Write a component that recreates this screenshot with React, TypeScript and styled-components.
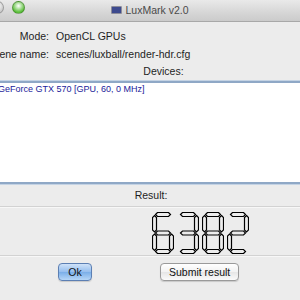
import styled, { createGlobalStyle } from "styled-components";

const GlobalStyle = createGlobalStyle`
  html, body {
    margin: 0;
    padding: 0;
    width: 300px;
    height: 300px;
    overflow: hidden;
    background: #ececec;
  }
  body {
    font-family: "Liberation Sans", "DejaVu Sans", sans-serif;
  }
`;

const Window = styled.div`
  margin-left: -40px;
  width: 380px;
  height: 300px;
  display: flex;
  flex-direction: column;
  background: #ececec;
  color: #1e1e1e;
`;

const TitleBar = styled.div`
  height: 21px;
  flex: none;
  display: flex;
  align-items: center;
  justify-content: center;
  position: relative;
  background: linear-gradient(#e9e9e9, #d6d6d6 60%, #cbcbcb);
  border-bottom: 1px solid #a8a8a8;
`;

const Lights = styled.div`
  position: absolute;
  left: 31px;
  top: 1px;
  display: flex;
  gap: 8px;
`;

const Light = styled.span<{ $color: string }>`
  width: 11px;
  height: 11px;
  border-radius: 50%;
  background: radial-gradient(circle at 50% 35%, #ffffff 0%, ${(p) => p.$color} 70%);
  border: 1px solid rgba(0, 0, 0, 0.25);
`;

const Title = styled.div`
  display: flex;
  align-items: center;
  gap: 3px;
  font-size: 10.5px;
  color: #4a4a4a;
  margin-top: -2px;
`;

const TitleIcon = styled.span`
  width: 9px;
  height: 6px;
  background: #3d4a8e;
  border: 1px solid #8d8d99;
  border-radius: 1px;
`;

const Form = styled.div`
  display: grid;
  grid-template-columns: 89px 1fr;
  column-gap: 7px;
  row-gap: 4px;
  padding-top: 7px;
  font-size: 10.5px;
  line-height: 14px;
`;

const Label = styled.div`
  display: flex;
  justify-content: flex-end;
  white-space: nowrap;
  height: 14px;
`;

const Value = styled.div`
  white-space: nowrap;
  height: 14px;
`;

const SectionLabel = styled.div<{ $shift: number; $top: number }>`
  font-size: 10.5px;
  line-height: 14px;
  text-align: center;
  padding-left: ${(p) => p.$shift}px;
  margin-top: ${(p) => p.$top}px;
  height: 14px;
`;

const ListBox = styled.div`
  height: 99px;
  margin-top: 3px;
  background: #ffffff;
  border-top: 2px solid #8fa8c6;
  border-bottom: 2px solid #8fa8c6;
  box-shadow: 0 -1px 0 #c4d3e4, 0 1px 0 #c4d3e4;
  padding: 0 0 0 38px;
  font-size: 9px;
  line-height: 13px;
  color: #22229a;
`;

const Divider = styled.div<{ $top: number }>`
  margin-top: ${(p) => p.$top}px;
  height: 1px;
  background: #d2d2d2;
  border-bottom: 1px solid #f7f7f7;
`;

const LcdRow = styled.div`
  display: flex;
  gap: 3px;
  padding: 4px 0 1px 192px;
  height: 42px;
`;

const ButtonRow = styled.div`
  display: flex;
  align-items: center;
  padding: 6px 0 0 98px;
  gap: 68px;
`;

const Button = styled.button<{ $primary?: boolean }>`
  height: 18px;
  padding: 0 8px;
  min-width: ${(p) => (p.$primary ? 34 : 0)}px;
  font-family: inherit;
  font-size: 10.5px;
  color: #111;
  border-radius: 4px;
  border: 1px solid ${(p) => (p.$primary ? "#5c7fb3" : "#9a9a9a")};
  background: ${(p) =>
    p.$primary
      ? "linear-gradient(#cfe2f8, #94bdee 50%, #7aaee8 51%, #b6d6f7)"
      : "linear-gradient(#ffffff, #f2f2f2 50%, #e6e6e6 51%, #fafafa)"};
  box-shadow: 0 1px 1px rgba(0, 0, 0, 0.15);
`;

type Seg = "a" | "b" | "c" | "d" | "e" | "f" | "g";

const DIGITS: Record<string, Seg[]> = {
  "6": ["a", "f", "g", "e", "d", "c"],
  "3": ["a", "b", "g", "c", "d"],
  "8": ["a", "b", "c", "d", "e", "f", "g"],
  "2": ["a", "b", "g", "e", "d"],
};

const W = 22;
const H = 42;
const T = 4;

function hseg(x1: number, x2: number, y: number) {
  const h = T / 2;
  return `${x1},${y} ${x1 + h},${y - h} ${x2 - h},${y - h} ${x2},${y} ${x2 - h},${y + h} ${x1 + h},${y + h}`;
}

function vseg(x: number, y1: number, y2: number) {
  const h = T / 2;
  return `${x},${y1} ${x + h},${y1 + h} ${x + h},${y2 - h} ${x},${y2} ${x - h},${y2 - h} ${x - h},${y1 + h}`;
}

const L = 2.5;
const R = W - 2.5;
const TOP = 2.5;
const MID = H / 2;
const BOT = H - 2.5;

const SEGS: Record<Seg, string> = {
  a: hseg(L + 1, R - 1, TOP),
  g: hseg(L + 1, R - 1, MID),
  d: hseg(L + 1, R - 1, BOT),
  f: vseg(L, TOP + 1, MID - 1),
  b: vseg(R, TOP + 1, MID - 1),
  e: vseg(L, MID + 1, BOT - 1),
  c: vseg(R, MID + 1, BOT - 1),
};

const Digit = ({ value }: { value: string }) => (
  <svg width={W} height={H} viewBox={`0 0 ${W} ${H}`}>
    {DIGITS[value].map((s) => (
      <polygon key={s} points={SEGS[s]} fill="none" stroke="#000" strokeWidth={1.2} />
    ))}
  </svg>
);

export default function App() {
  return (
    <>
      <GlobalStyle />
      <Window>
        <TitleBar>
          <Lights>
            <Light $color="#c9c9c9" />
            <Light $color="#5bbf3a" />
          </Lights>
          <Title>
            <TitleIcon />
            LuxMark v2.0
          </Title>
        </TitleBar>
        <Form>
          <Label>Mode:</Label>
          <Value>OpenCL GPUs</Value>
          <Label>Scene name:</Label>
          <Value>scenes/luxball/render-hdr.cfg</Value>
        </Form>
        <SectionLabel $shift={27} $top={3}>Devices:</SectionLabel>
        <ListBox>GeForce GTX 570 [GPU, 60, 0 MHz]</ListBox>
        <SectionLabel $shift={2} $top={4}>Result:</SectionLabel>
        <Divider $top={4} />
        <LcdRow>
          {"6382".split("").map((d, i) => (
            <Digit key={i} value={d} />
          ))}
        </LcdRow>
        <Divider $top={0} />
        <ButtonRow>
          <Button $primary>Ok</Button>
          <Button>Submit result</Button>
        </ButtonRow>
      </Window>
    </>
  );
}
